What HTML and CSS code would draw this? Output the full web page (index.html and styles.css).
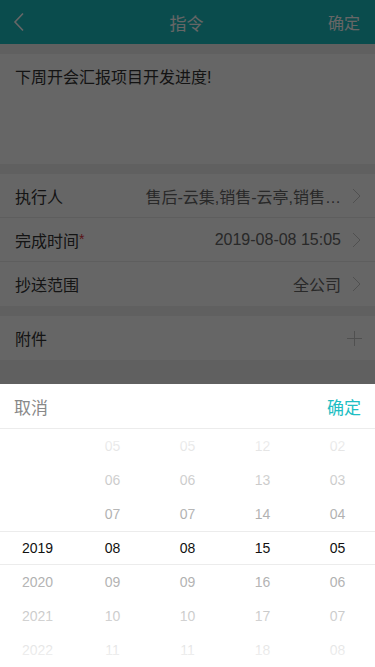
FILE: index.html
```html
<!DOCTYPE html>
<html lang="zh-CN">
<head>
    <meta charset="UTF-8">
    <title>指令</title>
    <meta name="viewport" content="width=device-width, initial-scale=1.0">
    <link rel="stylesheet" href="styles.css">
</head>
<body>

<div class="page">
    <header class="nav">
        <span class="nav-back">
            <svg width="12" height="20" viewBox="0 0 12 20"><polyline points="10,1.5 2,10 10,18.5" fill="none" stroke="#fff" stroke-width="1.6"/></svg>
        </span>
        <h1>指令</h1>
        <span class="nav-ok">确定</span>
    </header>

    <div class="memo">下周开会汇报项目开发进度!</div>

    <ul class="cells">
        <li class="cell">
            <span class="cell-label">执行人</span>
            <span class="cell-value">售后-云集,销售-云亭,销售…</span>
            <svg class="cell-arrow" width="9" height="16" viewBox="0 0 9 16"><polyline points="1,1 8,8 1,15" fill="none" stroke="#c8c8c8" stroke-width="1"/></svg>
        </li>
        <li class="cell">
            <span class="cell-label">完成时间<em>*</em></span>
            <span class="cell-value">2019-08-08 15:05</span>
            <svg class="cell-arrow" width="9" height="16" viewBox="0 0 9 16"><polyline points="1,1 8,8 1,15" fill="none" stroke="#c8c8c8" stroke-width="1"/></svg>
        </li>
        <li class="cell">
            <span class="cell-label">抄送范围</span>
            <span class="cell-value">全公司</span>
            <svg class="cell-arrow" width="9" height="16" viewBox="0 0 9 16"><polyline points="1,1 8,8 1,15" fill="none" stroke="#c8c8c8" stroke-width="1"/></svg>
        </li>
    </ul>

    <ul class="cells">
        <li class="cell">
            <span class="cell-label">附件</span>
            <svg class="cell-plus" width="15" height="15" viewBox="0 0 15 15"><path d="M7.5 0V15M0 7.5H15" stroke="#c8c8c8" stroke-width="1"/></svg>
        </li>
    </ul>
</div>

<div class="mask"></div>

<div class="picker">
    <div class="picker-head">
        <span class="picker-cancel">取消</span>
        <span class="picker-ok">确定</span>
    </div>
    <div class="picker-body">
        <ul class="picker-col">
            <li></li><li></li><li></li>
            <li class="on">2019</li><li>2020</li><li>2021</li><li>2022</li>
        </ul>
        <ul class="picker-col">
            <li>05</li><li>06</li><li>07</li>
            <li class="on">08</li><li>09</li><li>10</li><li>11</li>
        </ul>
        <ul class="picker-col">
            <li>05</li><li>06</li><li>07</li>
            <li class="on">08</li><li>09</li><li>10</li><li>11</li>
        </ul>
        <ul class="picker-col">
            <li>12</li><li>13</li><li>14</li>
            <li class="on">15</li><li>16</li><li>17</li><li>18</li>
        </ul>
        <ul class="picker-col">
            <li>02</li><li>03</li><li>04</li>
            <li class="on">05</li><li>06</li><li>07</li><li>08</li>
        </ul>
        <div class="picker-fade picker-fade-top"></div>
        <div class="picker-line"></div>
        <div class="picker-fade picker-fade-bottom"></div>
    </div>
</div>

</body>
</html>
```

FILE: styles.css
```css
* { box-sizing: border-box; }
:root {
    --main-color: #1abdc0;
    --bg-color: #efefef;
    --line-color: #ececec;
}
html, body {
    margin: 0px;
    height: 100%;
}
body {
    font-family: "Liberation Sans", "Noto Sans CJK SC", sans-serif;
    background-color: var(--bg-color);
    color: #333;
    overflow: hidden;
}
ul {
    margin: 0;
    padding: 0;
    list-style: none;
}

/* nav bar */
.nav {
    height: 44px;
    background-color: var(--main-color);
    display: flex;
    align-items: center;
    justify-content: space-between;
    padding: 0 15px 0 13px;
    color: #fff;
}
.nav h1 {
    margin: 0;
    font-size: 17px;
    font-weight: normal;
}
.nav-back {
    width: 32px;
    display: flex;
    align-items: center;
}
.nav-ok {
    width: 32px;
    font-size: 16px;
    text-align: right;
}

.memo {
    margin-top: 10px;
    height: 110px;
    padding: 13px 15px;
    background: #fff;
    font-size: 16px;
    line-height: 22px;
}

.cells {
    margin-top: 10px;
    background: #fff;
}
.cell {
    height: 44px;
    padding: 0 15px;
    display: flex;
    align-items: center;
    border-bottom: 1px solid var(--line-color);
    font-size: 16px;
}
.cell:last-child { border-bottom: none; }
.cell-label { flex: none; }
.cell-label em {
    color: #e0313b;
    font-style: normal;
    font-size: 14px;
    vertical-align: 3px;
    line-height: 16px;
}
.cell-value {
    margin-left: auto;
    color: #666;
    white-space: nowrap;
}
.cell-arrow {
    flex: none;
    margin-left: 11px;
    margin-right: -1px;
}
.cell-plus {
    margin-left: auto;
    margin-right: -2px;
}

.mask {
    position: fixed;
    top: 0; left: 0; right: 0; bottom: 0;
    background: rgba(0, 0, 0, 0.6);
}

/* date picker */
.picker {
    position: fixed;
    left: 0; right: 0; bottom: 0;
    background: #fff;
}
.picker-head {
    height: 45px;
    padding: 0 14px;
    display: flex;
    align-items: center;
    justify-content: space-between;
    border-bottom: 1px solid var(--line-color);
    font-size: 17px;
}
.picker-cancel { color: #888; }
.picker-ok { color: #20bec3; }

.picker-body {
    position: relative;
    display: grid;
    grid-template-columns: repeat(5, 1fr);
    height: 238px;
    overflow: hidden;
}
.picker-col li {
    height: 34px;
    line-height: 34px;
    text-align: center;
    font-size: 14px;
    color: #999;
}
.picker-col li.on { color: #111; }

.picker-fade {
    position: absolute;
    left: 0; right: 0;
    height: 102px;
}
.picker-fade-top {
    top: 0;
    background: linear-gradient(to bottom, rgba(255,255,255,0.92), rgba(255,255,255,0.12));
}
.picker-fade-bottom {
    bottom: 0;
    background: linear-gradient(to top, rgba(255,255,255,0.92), rgba(255,255,255,0.12));
}
.picker-line {
    position: absolute;
    left: 0; right: 0;
    top: 102px;
    height: 34px;
    border-top: 1px solid var(--line-color);
    border-bottom: 1px solid var(--line-color);
}
```
